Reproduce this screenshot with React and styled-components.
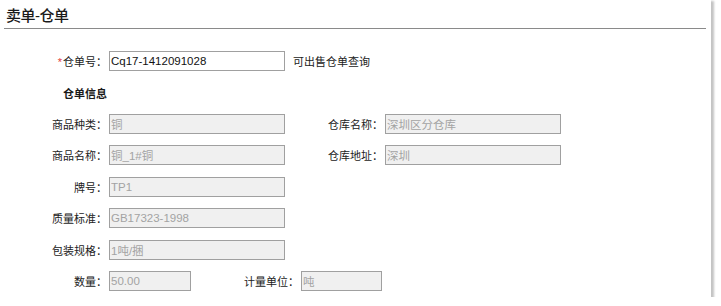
import React from 'react';
import styled, { createGlobalStyle } from 'styled-components';

const GlobalStyle = createGlobalStyle`
  html, body {
    margin: 0;
    padding: 0;
    background: #fff;
  }
  body {
    font-family: "Liberation Sans", "Noto Sans CJK SC", Arial, sans-serif;
    color: #333;
  }
`;

const Card = styled.div`
  width: 711px;
  height: 297px;
  background: #fff;
  box-shadow: 2px 2px 2px 1px #c4c4c4;
  overflow: hidden;
`;

const Header = styled.div`
  height: 28px;
  margin: 0 5px 0 4px;
  border-bottom: 1px solid #8a8a8a;
  display: flex;
  align-items: center;
`;

const Title = styled.h2`
  margin: 0 0 0 2px;
  font-size: 15px;
  font-weight: 500;
  color: #1a1a1a;
  letter-spacing: -0.5px;
`;

const Form = styled.div`
  padding-top: 22px;
  display: flex;
  flex-direction: column;
`;

const Row = styled.div`
  display: flex;
  align-items: center;
  height: 20px;
  margin-bottom: ${(p) => p.$gap ?? 11.4}px;
`;

const Label = styled.label`
  width: ${(p) => p.$width}px;
  flex: none;
  text-align: right;
  font-size: 11px;
  color: #222;
  margin-right: 2px;
  white-space: nowrap;
`;

const Required = styled.span`
  color: #e23a3a;
  font-size: 11px;
  margin-right: 1px;
`;

const Input = styled.input`
  box-sizing: border-box;
  width: ${(p) => p.$width}px;
  height: 20px;
  flex: none;
  margin: 0;
  padding: 0 1px;
  border: 1px solid #a0a0a0;
  background: ${(p) => (p.disabled ? '#f0f0f0' : '#fff')};
  color: ${(p) => (p.disabled ? '#a3a3a3' : '#111')};
  font-family: "Liberation Sans", "Noto Sans CJK SC", Arial, sans-serif;
  font-size: 11.5px;
  outline: none;
`;

const Hint = styled.span`
  margin-left: 8px;
  font-size: 11px;
  color: #222;
`;

const Section = styled.div`
  padding-left: 63px;
  margin: 15px 0 12px;
  height: 16px;
  line-height: 16px;
  font-size: 11px;
  font-weight: bold;
  color: #1a1a1a;
`;

const Field = ({ label, value, labelWidth = 107, width = 176, required }) => (
  <>
    <Label $width={labelWidth}>
      {required && <Required>*</Required>}
      {label}：
    </Label>
    <Input $width={width} value={value} disabled={!required} readOnly />
  </>
);

export default function App() {
  return (
    <>
      <GlobalStyle />
      <Card>
        <Header>
          <Title>卖单-仓单</Title>
        </Header>
        <Form>
          <Row $gap={0}>
            <Field label="仓单号" value="Cq17-1412091028" required />
            <Hint>可出售仓单查询</Hint>
          </Row>
          <Section>仓单信息</Section>
          <Row>
            <Field label="商品种类" value="铜" />
            <Field label="仓库名称" value="深圳区分仓库" labelWidth={98} />
          </Row>
          <Row>
            <Field label="商品名称" value="铜_1#铜" />
            <Field label="仓库地址" value="深圳" labelWidth={98} />
          </Row>
          <Row>
            <Field label="牌号" value="TP1" />
          </Row>
          <Row>
            <Field label="质量标准" value="GB17323-1998" />
          </Row>
          <Row>
            <Field label="包装规格" value="1吨/捆" />
          </Row>
          <Row>
            <Field label="数量" value="50.00" width={82} />
            <Field label="计量单位" value="吨" width={81} labelWidth={108} />
          </Row>
        </Form>
      </Card>
    </>
  );
}
